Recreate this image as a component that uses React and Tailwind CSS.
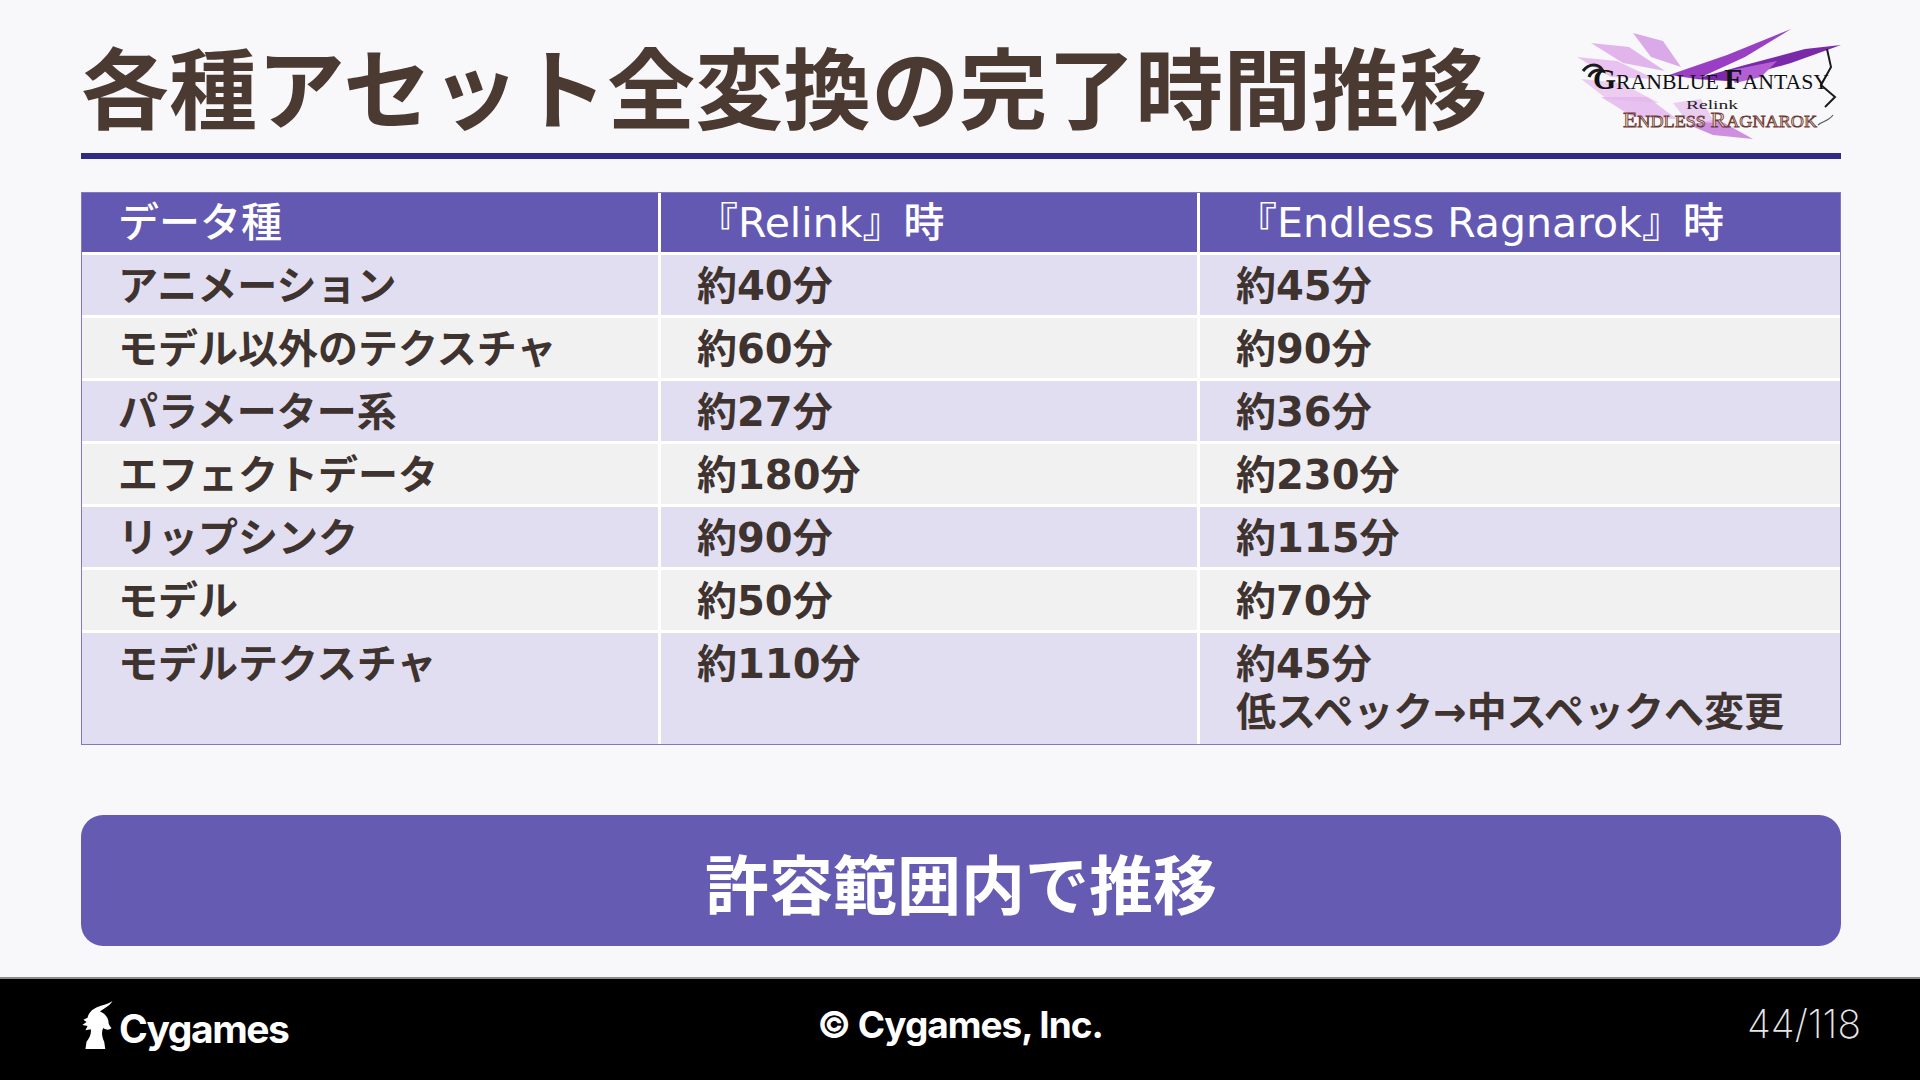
import React from 'react';

const rows = [
  ['アニメーション', '約40分', ['約45分']],
  ['モデル以外のテクスチャ', '約60分', ['約90分']],
  ['パラメーター系', '約27分', ['約36分']],
  ['エフェクトデータ', '約180分', ['約230分']],
  ['リップシンク', '約90分', ['約115分']],
  ['モデル', '約50分', ['約70分']],
  ['モデルテクスチャ', '約110分', ['約45分', '低スペック→中スペックへ変更']],
];

function GameLogo() {
  return (
    <svg width="266" height="114" viewBox="0 0 266 114" className="shrink-0">
      {/* feathered strokes behind the title */}
      <polygon points="0,30 40,34 78,52 34,50" fill="#e7b9ee" opacity="0.85" />
      <polygon points="14,16 52,20 88,44 46,36" fill="#dca3e8" opacity="0.8" />
      <polygon points="4,52 44,56 82,76 30,72" fill="#ebc6f1" opacity="0.9" />
      <polygon points="24,70 70,70 100,92 56,90" fill="#e2b3ec" opacity="0.8" />
      <polygon points="56,6 86,14 104,40 74,30" fill="#cf8fe2" opacity="0.75" />
      <polygon points="92,48 150,28 214,2 168,30 120,52" fill="#9a3fc4" />
      <polygon points="118,52 168,38 228,22 264,18 214,36 150,54" fill="#7a2aa8" />
      <polygon points="150,44 200,34 184,50 158,56" fill="#b45ed6" />
      <polygon points="112,98 140,92 176,112 136,108" fill="#c77ddb" opacity="0.85" />
      <polygon points="96,76 124,72 138,96 110,94" fill="#e8c5ef" opacity="0.85" />
      <path d="M250 22 L254 40 L244 58 L258 70 L248 80" stroke="#1c1c1c" strokeWidth="2" fill="none" />
      <path d="M6 44 C12 36 22 36 26 44 C20 42 14 44 12 50" stroke="#1c1c1c" strokeWidth="3" fill="none" />
      <text x="16" y="62" fontFamily="'Liberation Serif', serif" fill="#111" textLength="236" lengthAdjust="spacingAndGlyphs">
        <tspan fontSize="30" fontWeight="bold">G</tspan>
        <tspan fontSize="22">RANBLUE </tspan>
        <tspan fontSize="30" fontWeight="bold">F</tspan>
        <tspan fontSize="22">ANTASY</tspan>
      </text>
      <text x="109" y="82" fontFamily="'Liberation Serif', serif" fontSize="12" fill="#222" textLength="52" lengthAdjust="spacingAndGlyphs">Relink</text>
      <text x="46" y="100" fill="#efd9c3" stroke="#6d3b36" strokeWidth="0.8" fontFamily="'Liberation Serif', serif" textLength="194" lengthAdjust="spacingAndGlyphs">
        <tspan fontSize="22">E</tspan>
        <tspan fontSize="17">NDLESS </tspan>
        <tspan fontSize="22">R</tspan>
        <tspan fontSize="17">AGNAROK</tspan>
      </text>
      <path d="M241 98 C246 94 252 94 256 88" stroke="#555" strokeWidth="1.2" fill="none" />
    </svg>
  );
}

function CygamesMark() {
  return (
    <svg width="38" height="50" viewBox="0 0 36 48" className="shrink-0">
      <path
        d="M31 1 C27 4 21 5 16 7 C11 9 8 13 7 17 L3 19 L6 21 L2 24 L7 25 L5 29 L10 28 C11 32 9 36 6 40 L5 47 L24 47 L23 40 C21 36 20 31 22 27 C25 29 28 29 30 27 C28 25 27 23 27 20 C26 15 22 12 19 11 C23 8 28 6 31 1 Z"
        fill="#fff"
      />
    </svg>
  );
}

const cell = "pl-[36px] pt-[7px] pb-[5px] text-[40px] font-bold leading-[48px] text-[#3f3330] font-['DejaVu_Sans','Noto_Sans_CJK_JP',sans-serif]";
const headCell = "flex h-[59px] items-center bg-[#6359b3] pl-[36px] pt-[2px] text-[41px] font-medium text-white font-['DejaVu_Sans','Noto_Sans_CJK_JP',sans-serif]";

export default function App() {
  return (
    <div className="flex h-[1080px] w-[1920px] flex-col overflow-hidden bg-[#f8f8fb] font-['Noto_Sans_CJK_JP',sans-serif]">
      <main className="flex flex-1 flex-col pl-[81px] pr-[79px]">
        <header className="flex h-[141px] items-start justify-between">
          <h1 className="mt-[40px] h-[88px] text-[88px] font-bold leading-[88px] text-[#4a3a31]">
            各種アセット全変換の完了時間推移
          </h1>
          <div className="mt-[27px] -mr-[2px]">
            <GameLogo />
          </div>
        </header>
        <div className="mt-[12px] h-[6px] bg-[#302a85]" />

        <div className="mt-[33px] grid grid-cols-[576px_536px_1fr] gap-[3px] border border-[#8178c4] bg-white">
          <div className={headCell}>データ種</div>
          <div className={headCell}>『Relink』時</div>
          <div className={headCell}>『Endless Ragnarok』時</div>
          {rows.map(([kind, relink, endless], i) => {
            const bg = i % 2 === 0 ? 'bg-[#e1def1]' : 'bg-[#f1f1f2]';
            return (
              <React.Fragment key={kind}>
                <div className={`${bg} ${cell}`}>{kind}</div>
                <div className={`${bg} ${cell}`}>{relink}</div>
                <div className={`${bg} ${cell} ${endless.length > 1 ? 'pb-[8px]' : ''}`}>
                  {endless.map((line) => (
                    <div key={line}>{line}</div>
                  ))}
                </div>
              </React.Fragment>
            );
          })}
        </div>

        <div className="mt-[70px] flex h-[131px] items-center justify-center rounded-[22px] bg-[#655bb3] text-[64px] font-bold text-white">
          許容範囲内で推移
        </div>
      </main>

      <footer className="grid h-[103px] shrink-0 grid-cols-[1fr_auto_1fr] items-center border-t-2 border-[#8a8a8a] bg-black pb-[10px] pl-[80px] pr-[59px] text-white">
        <div className="flex items-end gap-[1px]">
          <CygamesMark />
          <span className="mb-[2px] font-['Inter',sans-serif] text-[39px] font-bold leading-none tracking-[-1.5px]">Cygames</span>
        </div>
        <div className="-ml-[21px] font-['Inter',sans-serif] text-[37px] font-bold tracking-[-1px]">© Cygames, Inc.</div>
        <div className="text-right font-['Inter',sans-serif] text-[39px] font-extralight text-[#e6e6e6]">44/118</div>
      </footer>
    </div>
  );
}
